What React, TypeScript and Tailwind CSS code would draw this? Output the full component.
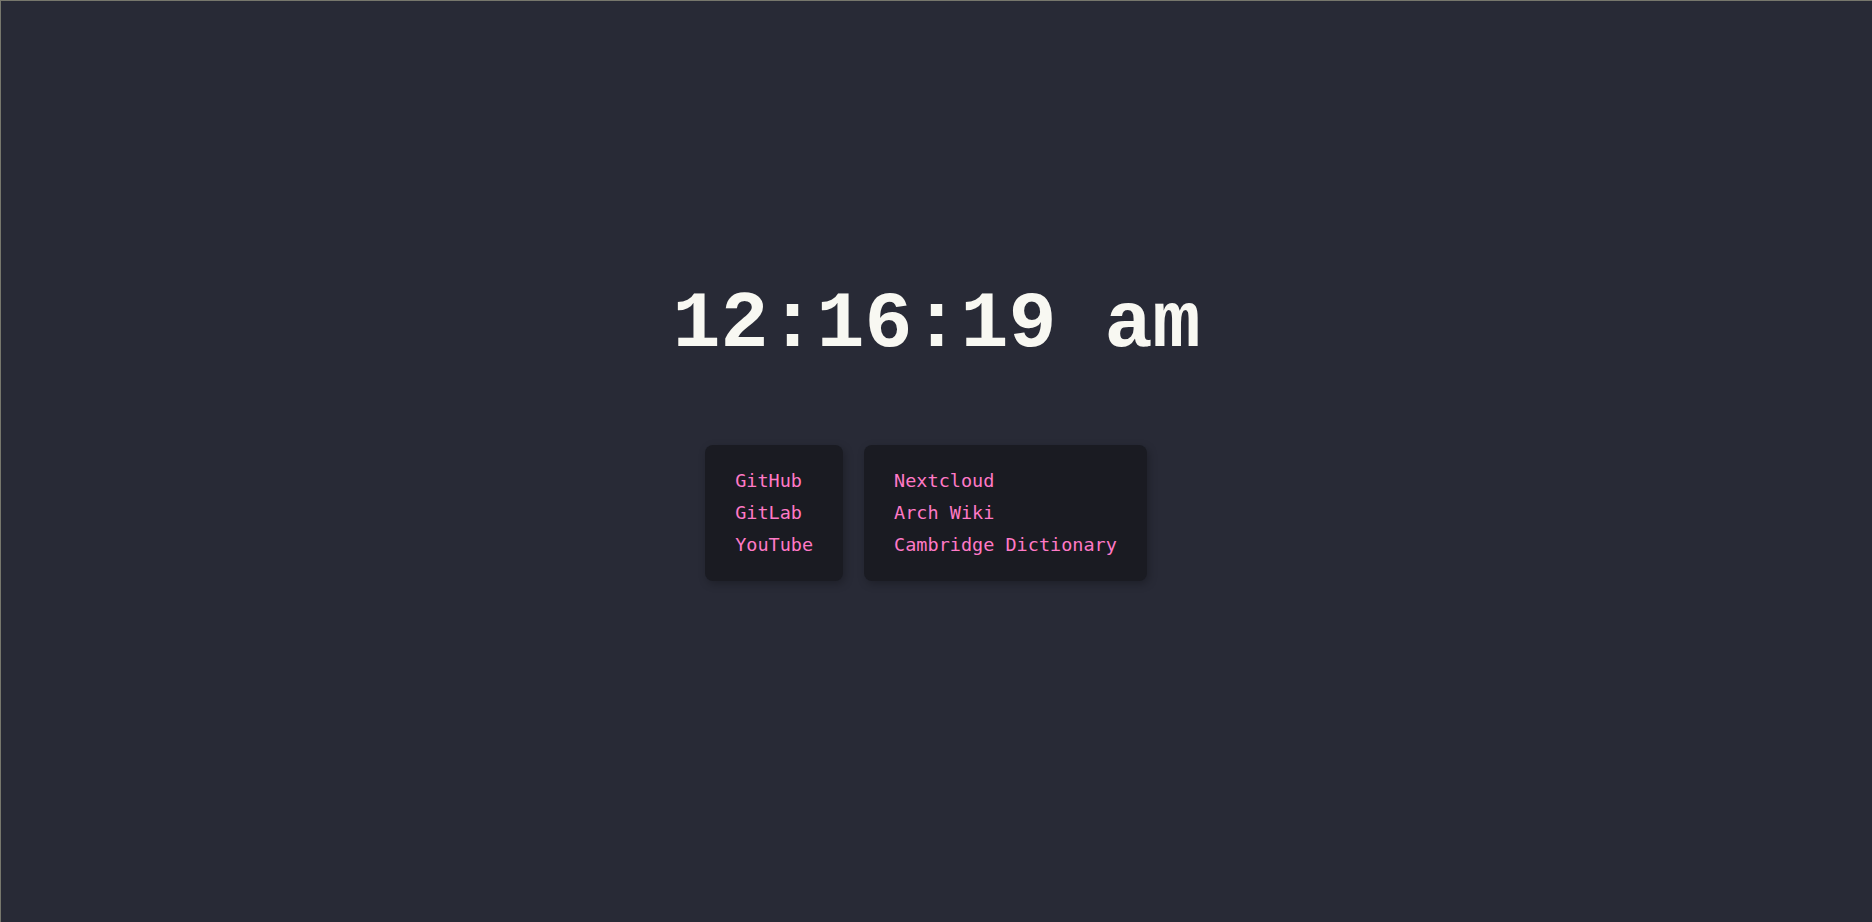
export default function App() {
  const left = ["GitHub", "GitLab", "YouTube"];
  const right = ["Nextcloud", "Arch Wiki", "Cambridge Dictionary"];
  return (
    <div className="w-[1872px] h-[922px] bg-[#282a36] border-t border-l border-[#77776c] flex flex-col items-center overflow-hidden">
      <div
        className="mt-[284px] text-[80px] leading-none font-bold text-[#f8f8f2]"
        style={{ fontFamily: '"Liberation Mono", "Courier New", monospace' }}
      >
        12:16:19 am
      </div>
      <div className="mt-[80px] flex">
        {[left, right].map((col, i) => (
          <ul
            key={i}
            className="mr-[21px] bg-[#1a1b22] rounded-lg px-[30px] py-[20px] shadow-[2px_3px_8px_rgba(0,0,0,0.25)]"
          >
            {col.map((t) => (
              <li key={t} className="leading-[31px]">
                <a
                  href="#"
                  className="text-[18.5px] text-[#ff79c6] whitespace-nowrap"
                  style={{ fontFamily: '"DejaVu Sans Mono", monospace' }}
                >
                  {t}
                </a>
              </li>
            ))}
          </ul>
        ))}
      </div>
    </div>
  );
}
